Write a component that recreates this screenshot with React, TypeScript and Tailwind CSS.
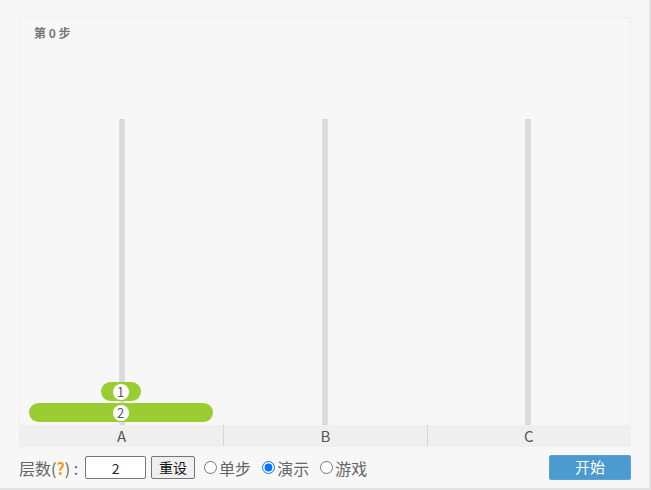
import React, { useState } from "react";

const FONT = { fontFamily: '"Microsoft YaHei", "Noto Sans CJK SC", "Noto Sans", sans-serif' };

const PEGS = ["A", "B", "C"];

export default function App() {
  const [mode, setMode] = useState("demo");
  const [levels, setLevels] = useState("2");
  const disks = [1, 2];

  return (
    <div
      className="w-[651px] h-[490px] bg-[#f7f7f7] border-r-2 border-b-2 border-[#e2e2e2] pl-[19px] pt-[17px] text-[#555]"
      style={FONT}
    >
      {/* Board */}
      <div className="w-[612px] border border-dotted border-[#e6e6e6] relative">
        <div className="absolute left-[14px] top-[6px] text-[12px] font-bold text-[#777] z-10">第 0 步</div>

        <div className="grid grid-cols-3 h-[407px]">
          {PEGS.map((p, i) => (
            <div key={p} className="relative flex flex-col items-center justify-end pb-[3px] gap-[2px]">
              <div className="absolute bottom-0 left-1/2 -translate-x-1/2 w-[5px] h-[306px] bg-[#dcdcdc] border border-[#d6d6d6]" />
              {i === 0 &&
                disks.map((d) => (
                  <div
                    key={d}
                    className="relative z-10 h-[19px] rounded-full bg-[#9acd32] flex items-center justify-center -translate-x-[1px]"
                    style={{ width: d === 1 ? 40 : 184 }}
                  >
                    <span className="w-[16px] h-[16px] rounded-full bg-white text-[#555] text-[13px] leading-[16px] text-center">
                      {d}
                    </span>
                  </div>
                ))}
            </div>
          ))}
        </div>

        {/* Peg labels */}
        <div className="grid grid-cols-3 h-[21px] bg-[#efefef] text-[15px] text-[#555]">
          {PEGS.map((p, i) => (
            <div
              key={p}
              className={`flex items-center justify-center leading-none ${i > 0 ? "border-l border-[#d5d5d5]" : ""}`}
            >
              {p}
            </div>
          ))}
        </div>
      </div>

      {/* Controls */}
      <div className="w-[612px] mt-[8px] flex items-center h-[25px] text-[16px] text-[#666]">
        <span>
          层数(<span className="text-[#f39c12] font-bold">?</span>) :
        </span>
        <input
          value={levels}
          onChange={(e) => setLevels(e.target.value)}
          className="ml-[7px] w-[61px] h-[23px] border border-[#767676] rounded-[2px] bg-white text-center text-[14px] text-[#222] outline-none"
        />
        <button className="ml-[5px] w-[44px] h-[23px] border border-[#767676] rounded-[2px] bg-[#efefef] text-[14px] text-[#111]">
          重设
        </button>
        <div className="flex items-center ml-[9px] gap-[11px]">
          {[
            ["step", "单步"],
            ["demo", "演示"],
            ["game", "游戏"],
          ].map(([v, label]) => (
            <label key={v} className="flex items-center">
              <input
                type="radio"
                name="mode"
                checked={mode === v}
                onChange={() => setMode(v)}
                className="w-[13px] h-[13px] m-0 mr-[2px] accent-[#0075ff]"
              />
              {label}
            </label>
          ))}
        </div>
        <button className="ml-auto w-[82px] h-[25px] rounded-[2px] bg-[#4b9bd1] border border-[#5aa3d6] text-white text-[15px]">
          开始
        </button>
      </div>
    </div>
  );
}
